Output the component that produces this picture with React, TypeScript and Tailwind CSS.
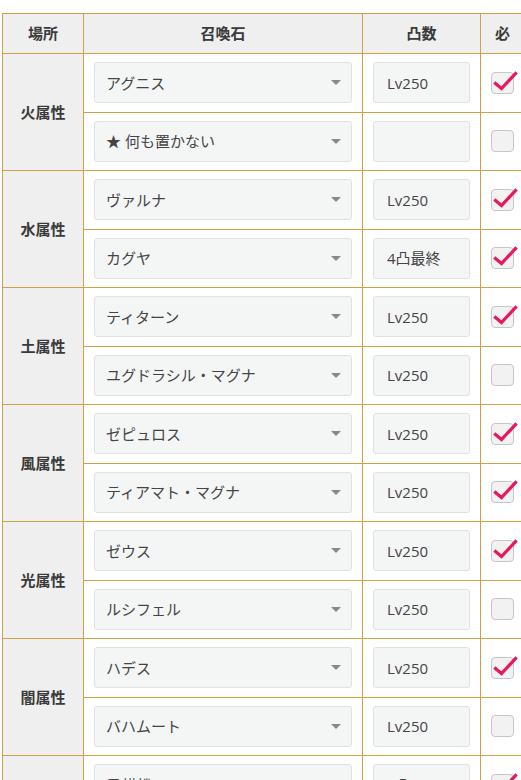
import React from 'react';

type Slot = { name: string; level: string; required: boolean };
type Group = { place: string; slots: Slot[] };

const groups: Group[] = [
  { place: '火属性', slots: [
    { name: 'アグニス', level: 'Lv250', required: true },
    { name: '★ 何も置かない', level: '', required: false },
  ] },
  { place: '水属性', slots: [
    { name: 'ヴァルナ', level: 'Lv250', required: true },
    { name: 'カグヤ', level: '4凸最終', required: true },
  ] },
  { place: '土属性', slots: [
    { name: 'ティターン', level: 'Lv250', required: true },
    { name: 'ユグドラシル・マグナ', level: 'Lv250', required: false },
  ] },
  { place: '風属性', slots: [
    { name: 'ゼピュロス', level: 'Lv250', required: true },
    { name: 'ティアマト・マグナ', level: 'Lv250', required: true },
  ] },
  { place: '光属性', slots: [
    { name: 'ゼウス', level: 'Lv250', required: true },
    { name: 'ルシフェル', level: 'Lv250', required: false },
  ] },
  { place: '闇属性', slots: [
    { name: 'ハデス', level: 'Lv250', required: true },
    { name: 'バハムート', level: 'Lv250', required: false },
  ] },
  { place: 'フリー', slots: [
    { name: '黒麒麟', level: '3凸', required: true },
    { name: 'オリヴィエ', level: 'Lv100', required: false },
  ] },
];

const Check = ({ checked }: { checked: boolean }) => (
  <div className="relative w-[23px] h-[22px] rounded-[4px] border border-[#c6c6c6] bg-[#f2f2f2]">
    {checked && (
      <svg className="absolute left-0 top-0 overflow-visible" width="23" height="22" viewBox="0 0 23 22">
        <path d="M3.5 10.5 L9.5 15.5 L23.5 0.5" fill="none" stroke="#e8185a" strokeWidth="3.2" strokeLinecap="square" strokeLinejoin="miter" />
      </svg>
    )}
  </div>
);

export default function App() {
  const cell = 'border border-[#cfa247]';
  return (
    <div
      className="w-[521px] h-[780px] overflow-hidden bg-white pt-[13px] pl-[2px] text-[#333]"
      style={{ fontFamily: '"Open Sans", "Noto Sans CJK JP", sans-serif' }}
    >
      <table className="border-collapse table-fixed w-[522px]">
        <colgroup>
          <col className="w-[81px]" />
          <col className="w-[279px]" />
          <col className="w-[118px]" />
          <col className="w-[44px]" />
        </colgroup>
        <thead>
          <tr className="h-[40px] bg-[#efefef]">
            {['場所', '召喚石', '凸数', '必'].map((h) => (
              <th key={h} className={`${cell} text-[15px] font-bold text-center text-[#3a3a3a]`}>{h}</th>
            ))}
          </tr>
        </thead>
        <tbody>
          {groups.map((g) =>
            g.slots.map((s, i) => (
              <tr key={g.place + i} className="h-[58.5px]">
                {i === 0 && (
                  <td rowSpan={g.slots.length} className={`${cell} bg-[#efefef] text-center text-[15px] font-bold text-[#3a3a3a]`}>
                    {g.place}
                  </td>
                )}
                <td className={`${cell} px-[10px] py-[8px]`}>
                  <div className="flex items-center justify-between h-[41px] rounded-[3px] border border-[#dde2e2] bg-[#f4f6f6] pl-[11px] pr-[10px]">
                    <span className="text-[15px] text-[#444]">{s.name}</span>
                    <span className="w-0 h-0 border-l-[5px] border-r-[5px] border-t-[5px] border-l-transparent border-r-transparent border-t-[#888]" />
                  </div>
                </td>
                <td className={`${cell} px-[10px] py-[8px]`}>
                  <div className="flex items-center h-[41px] rounded-[3px] border border-[#dde2e2] bg-[#f4f6f6] pl-[13px]">
                    <span className="text-[15px] text-[#444]">{s.level}</span>
                  </div>
                </td>
                <td className={`${cell} pl-[10px]`}>
                  <Check checked={s.required} />
                </td>
              </tr>
            ))
          )}
        </tbody>
      </table>
    </div>
  );
}
